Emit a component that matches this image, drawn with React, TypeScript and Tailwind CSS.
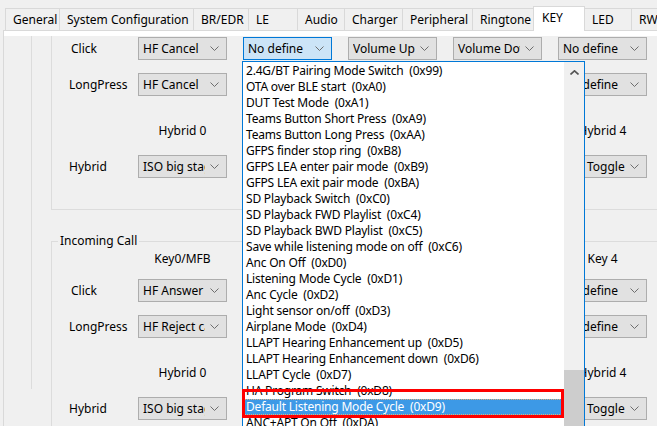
const tabs = [
  { label: "General", w: "w-[55px] border-l" },
  { label: "System Configuration", w: "w-[134px]" },
  { label: "BR/EDR", w: "w-[55px]" },
  { label: "LE", w: "w-[49px]" },
  { label: "Audio", w: "w-[47px]" },
  { label: "Charger", w: "w-[58px]" },
  { label: "Peripheral", w: "w-[70px]" },
  { label: "Ringtone", w: "w-[61px]" },
  { label: "KEY", w: "w-[52px]", active: true },
  { label: "LED", w: "w-[47px]" },
  { label: "RW", w: "w-[60px]" },
];

const options = [
  "2.4G/BT Pairing Mode Switch  (0x99)",
  "OTA over BLE start  (0xA0)",
  "DUT Test Mode  (0xA1)",
  "Teams Button Short Press  (0xA9)",
  "Teams Button Long Press  (0xAA)",
  "GFPS finder stop ring  (0xB8)",
  "GFPS LEA enter pair mode  (0xB9)",
  "GFPS LEA exit pair mode  (0xBA)",
  "SD Playback Switch  (0xC0)",
  "SD Playback FWD Playlist  (0xC4)",
  "SD Playback BWD Playlist  (0xC5)",
  "Save while listening mode on off  (0xC6)",
  "Anc On Off  (0xD0)",
  "Listening Mode Cycle  (0xD1)",
  "Anc Cycle  (0xD2)",
  "Light sensor on/off  (0xD3)",
  "Airplane Mode  (0xD4)",
  "LLAPT Hearing Enhancement up  (0xD5)",
  "LLAPT Hearing Enhancement down  (0xD6)",
  "LLAPT Cycle  (0xD7)",
  "HA Program Switch  (0xD8)",
  "Default Listening Mode Cycle  (0xD9)",
  "ANC+APT On Off  (0xDA)",
  "Ambient Sound Cycle  (0xDB)",
];
const SELECTED = 21;

type Row = { label: string; pad: string; values: string[]; focus?: number };
type GroupDef = { title?: string; header: string[]; hybrid: string[]; rows: Row[] };

const groups: GroupDef[] = [
  {
    header: ["Key0/MFB", "Key 1", "Key 2", "Key 3", "Key 4"],
    hybrid: ["Hybrid 0", "Hybrid 1", "Hybrid 2", "Hybrid 3", "Hybrid 4"],
    rows: [
      { label: "Click", pad: "pl-[19px]", values: ["HF Cancel", "No define", "Volume Up", "Volume Down", "No define"], focus: 1 },
      { label: "LongPress", pad: "pl-[17px]", values: ["HF Cancel", "No define", "No define", "No define", "No define"] },
      { label: "Hybrid", pad: "pl-[17px]", values: ["ISO big stage", "No define", "No define", "No define", "Anc Toggle"] },
    ],
  },
  {
    title: "Incoming Call",
    header: ["Key0/MFB", "Key 1", "Key 2", "Key 3", "Key 4"],
    hybrid: ["Hybrid 0", "Hybrid 1", "Hybrid 2", "Hybrid 3", "Hybrid 4"],
    rows: [
      { label: "Click", pad: "pl-[19px]", values: ["HF Answer", "No define", "No define", "No define", "No define"] },
      { label: "LongPress", pad: "pl-[17px]", values: ["HF Reject call", "No define", "No define", "No define", "No define"] },
      { label: "Hybrid", pad: "pl-[17px]", values: ["ISO big stage", "No define", "No define", "No define", "Anc Toggle"] },
    ],
  },
];

function Chevron({ up = false }: { up?: boolean }) {
  return (
    <svg width="9" height="5" viewBox="0 0 9 5" className="shrink-0">
      <path
        d={up ? "M0.5 4.5 L4.5 0.8 L8.5 4.5" : "M0.5 0.5 L4.5 4.5 L8.5 0.5"}
        fill="none"
        stroke={up ? "#555" : "#6d6d6d"}
        strokeWidth={up ? 1.6 : 1}
      />
    </svg>
  );
}

function Combo({ value, focused }: { value: string; focused?: boolean }) {
  return (
    <div
      className={`flex h-[23px] w-[89px] items-center border pl-[4px] pr-[7px] ${
        focused ? "border-[#0078d7] bg-[#cce4f7]" : "border-[#adadad] bg-[#e1e1e1]"
      }`}
    >
      <span className="w-[62px] overflow-hidden whitespace-nowrap">{value}</span>
      <span className="flex-1" />
      <Chevron />
    </div>
  );
}

function Labels({ items }: { items: string[] }) {
  return (
    <div className="flex h-[16px] items-center gap-[16px] pl-[86px]">
      {items.map((t) => (
        <div key={t} className="w-[89px] text-center whitespace-nowrap">
          {t}
        </div>
      ))}
    </div>
  );
}

function ComboRow({ row, className }: { row: Row; className: string }) {
  return (
    <div className={`flex items-center ${className}`}>
      <div className={`w-[86px] ${row.pad}`}>{row.label}</div>
      <div className="flex gap-[16px]">
        {row.values.map((v, i) => (
          <Combo key={i} value={v} focused={row.focus === i} />
        ))}
      </div>
    </div>
  );
}

function Group({ g, className = "" }: { g: GroupDef; className?: string }) {
  return (
    <div className={`relative w-[700px] border-y border-l border-[#dcdcdc] ${className}`}>
      {g.title && (
        <span className="absolute -top-[9px] left-[6px] bg-[#f0f0f0] px-[2px] leading-[16px]">{g.title}</span>
      )}
      <div className="mt-[9px]">
        <Labels items={g.header} />
      </div>
      <ComboRow row={g.rows[0]} className="mt-[12px]" />
      <ComboRow row={g.rows[1]} className="mt-[13px]" />
      <div className="mt-[27px]">
        <Labels items={g.hybrid} />
      </div>
      <ComboRow row={g.rows[2]} className="mt-[16px] mb-[31px]" />
    </div>
  );
}

export default function App() {
  return (
    <div className="relative h-[426px] w-[657px] overflow-hidden bg-[#f0f0f0] font-['Noto_Sans',sans-serif] text-[12px] leading-[16px] text-black">
      {/* tab strip */}
      <div className="flex h-[30px] items-end pl-[5px]">
        {tabs.map((t) =>
          t.active ? (
            <div
              key={t.label}
              className={`relative z-10 -mb-[1px] -ml-[1px] h-[25px] shrink-0 border-x border-t border-[#d9d9d9] bg-white pt-[3px] pl-[8px] ${t.w}`}
            >
              {t.label}
            </div>
          ) : (
            <div
              key={t.label}
              className={`h-[22px] shrink-0 border-r border-t border-[#d9d9d9] pt-[3px] pl-[7px] whitespace-nowrap ${t.w}`}
            >
              {t.label}
            </div>
          )
        )}
      </div>

      {/* tab page */}
      <div className="ml-[3px] border-l border-t border-[#d9d9d9] bg-white pt-[5px]">
        <div className="h-[390px] overflow-hidden bg-[#f0f0f0]">
          <div className="ml-[27px] h-full border-l border-[#dcdcdc] pl-[19px]">
            <div className="-mt-[37px]">
              <Group g={groups[0]} />
              <Group g={groups[1]} className="mt-[31px]" />
            </div>
          </div>
        </div>
      </div>

      {/* open dropdown list */}
      <div className="absolute left-[242px] top-[61px] z-20 flex h-[380px] w-[343px] border border-[#0078d7] bg-white">
        <div className="flex-1 pt-[1px] tracking-[-0.2px]">
          {options.map((o, i) => (
            <div
              key={o}
              className={`h-[16px] whitespace-pre pl-[3px] leading-[16px] ${
                i === SELECTED
                  ? "bg-[#3d99e6] text-white outline-1 outline-dotted -outline-offset-1 outline-[#e0b078]"
                  : ""
              }`}
            >
              {o}
            </div>
          ))}
        </div>
        <div className="flex w-[20px] flex-col bg-[#f0f0f0]">
          <div className="flex h-[20px] items-center justify-center">
            <Chevron up />
          </div>
          <div className="h-[288px]" />
          <div className="flex-1 bg-[#cdcdcd]" />
        </div>
      </div>

      {/* annotation */}
      <div className="absolute left-[242px] top-[389px] z-30 h-[29px] w-[322px] border-[3px] border-[#ff0000]" />
    </div>
  );
}
